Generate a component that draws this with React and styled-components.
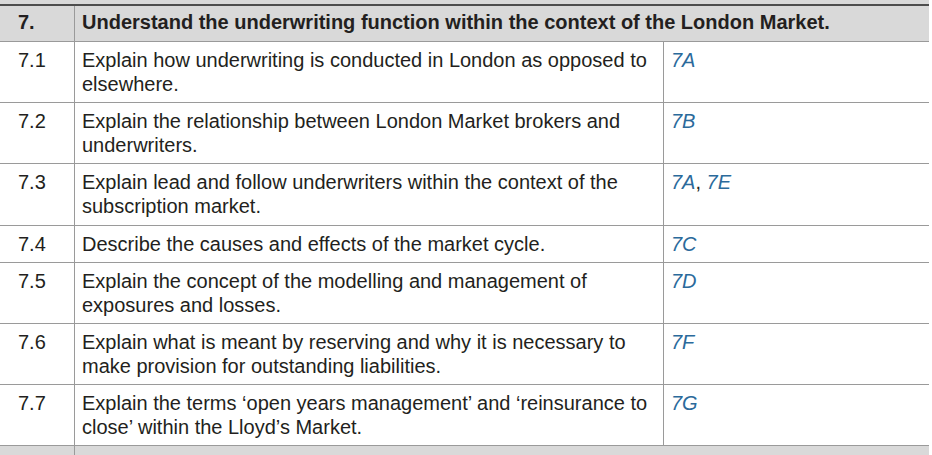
import React from "react";
import styled, { createGlobalStyle } from "styled-components";

const GlobalStyle = createGlobalStyle`
  html, body {
    margin: 0;
    padding: 0;
    background: #ffffff;
  }
  body {
    font-family: "Liberation Sans", Arial, sans-serif;
    color: #231f20;
  }
`;

const Sheet = styled.div`
  width: 929px;
  display: flex;
  flex-direction: column;
`;

const Strip = styled.div`
  height: 4px;
  background: #d9d9d9;
`;

const HeadRow = styled.div`
  display: grid;
  grid-template-columns: 74px 1fr;
  background: #d9d9d9;
  border-top: ${p => (p.$thick ? "2px solid #4d4d4d" : "none")};
  border-bottom: 1px solid #9a9a9a;
  font-weight: 700;
`;

const Row = styled.div`
  display: grid;
  grid-template-columns: 74px 589px 1fr;
  border-bottom: 1px solid #9a9a9a;
`;

const Cell = styled.div`
  padding: ${p => (p.$head ? "4px 7px 7px" : "6px 7px 6px")};
  padding-left: ${p => (p.$num ? "18px" : "7px")};
  border-left: ${p => (p.$num ? "none" : "1px solid #9a9a9a")};
  font-size: 20px;
  line-height: ${p => (p.$head ? "24px" : "24.1px")};
`;

const Ref = styled.span`
  color: #2b6a9b;
  font-style: italic;
`;

const Sep = styled.span`
  color: #231f20;
`;

const rows = [
  {
    num: "7.1",
    text: "Explain how underwriting is conducted in London as opposed to elsewhere.",
    refs: ["7A"]
  },
  {
    num: "7.2",
    text: "Explain the relationship between London Market brokers and underwriters.",
    refs: ["7B"]
  },
  {
    num: "7.3",
    text: "Explain lead and follow underwriters within the context of the subscription market.",
    refs: ["7A", "7E"]
  },
  {
    num: "7.4",
    text: "Describe the causes and effects of the market cycle.",
    refs: ["7C"]
  },
  {
    num: "7.5",
    text: "Explain the concept of the modelling and management of exposures and losses.",
    refs: ["7D"]
  },
  {
    num: "7.6",
    text: "Explain what is meant by reserving and why it is necessary to make provision for outstanding liabilities.",
    refs: ["7F"]
  },
  {
    num: "7.7",
    text: "Explain the terms \u2018open years management\u2019 and \u2018reinsurance to close\u2019 within the Lloyd\u2019s Market.",
    refs: ["7G"]
  }
];

const App = () => {
  return (
    <>
      <GlobalStyle />
      <Sheet>
        <Strip />
        <HeadRow $thick>
          <Cell $num $head>7.</Cell>
          <Cell $head>Understand the underwriting function within the context of the London Market.</Cell>
        </HeadRow>
        {rows.map(r => (
          <Row key={r.num}>
            <Cell $num>{r.num}</Cell>
            <Cell>{r.text}</Cell>
            <Cell>
              {r.refs.map((ref, i) => (
                <React.Fragment key={ref}>
                  {i > 0 && <Sep>, </Sep>}
                  <Ref>{ref}</Ref>
                </React.Fragment>
              ))}
            </Cell>
          </Row>
        ))}
        <HeadRow>
          <Cell $num $head>&nbsp;</Cell>
          <Cell $head>&nbsp;</Cell>
        </HeadRow>
      </Sheet>
    </>
  );
};

export default App;
